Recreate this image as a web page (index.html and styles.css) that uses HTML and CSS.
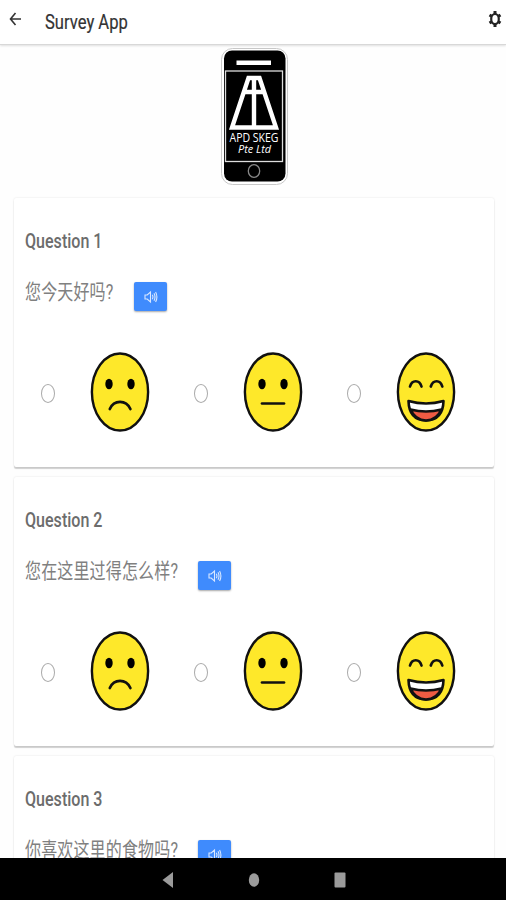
FILE: index.html
```html
<!DOCTYPE html>
<html lang="zh">
<head>
  <meta charset="UTF-8" />
  <meta name="viewport" content="width=device-width, initial-scale=1.0"/>
  <title>Survey App</title>
  <link rel="stylesheet" href="styles.css">
</head>
<body>
  <svg class="defs">
    <symbol id="sad" viewBox="0 0 60 80">
      <ellipse class="skin" cx="30" cy="40" rx="28.1" ry="38.5"/>
      <ellipse cx="19" cy="32" rx="3.7" ry="5.2"/>
      <ellipse cx="41" cy="32" rx="3.7" ry="5.2"/>
      <path class="line" d="M19.8 57C24 47.5 36 47.5 40.4 57"/>
    </symbol>
    <symbol id="neutral" viewBox="0 0 60 80">
      <ellipse class="skin" cx="30" cy="40" rx="28.1" ry="38.5"/>
      <ellipse cx="19" cy="32" rx="3.7" ry="5.2"/>
      <ellipse cx="41" cy="32" rx="3.7" ry="5.2"/>
      <path class="line" d="M19 51.5H41"/>
    </symbol>
    <symbol id="happy" viewBox="0 0 60 80">
      <ellipse class="skin" cx="30" cy="40" rx="28.1" ry="38.5"/>
      <path class="line" d="M14 34.5C16 27.5 23.5 27.5 25.5 34.5M34.8 34.5C37 27.5 44.3 27.5 46.3 34.5"/>
      <path class="teeth" d="M12.5 49Q30 54 47.500 49Q47 68 30 68.500Q13 68 12.500 49Z"/>
      <path class="tongue" d="M14.5 57.5Q30 61.500 45.500 57.500Q41 68 30 68.500Q19 68 14.500 57.500Z"/>
    </symbol>
    <symbol id="volume" viewBox="0 0 14 14">
      <path d="M1 5H3.200L6.500 2V12L3.200 9H1Z"/>
      <path d="M8.300 4.800Q9.600 7 8.300 9.200M10 3.300Q12 7 10 10.700M11.600 2Q14.200 7 11.600 12"/>
    </symbol>
  </svg>

  <div class="screen">
    <header class="toolbar">
      <svg class="back" viewBox="0 0 14 18"><path d="M13 9H2.500M7.500 3L2.500 9L7.500 15"/></svg>
      <h1>Survey App</h1>
      <svg class="settings" viewBox="0 0 14 18">
        <path class="gear" d="M7 1V4M7 14V17M1.500 5L4 6.500M10 11.500L12.500 13M12.500 5L10 6.500M4 11.500L1.500 13"/>
        <ellipse class="ring" cx="7" cy="9" rx="3.800" ry="5"/>
      </svg>
    </header>

    <main class="content">
      <svg class="logo" viewBox="0 0 70 140">
        <rect class="case" x="1.500" y="1.500" width="66" height="136" rx="11"/>
        <rect x="4" y="3.500" width="61.500" height="131" rx="8"/>
        <rect class="fill" x="16.500" y="13.500" width="34.500" height="4.500"/>
        <rect class="frame" x="5.500" y="24" width="57" height="90.500"/>
        <path class="mark" d="M28.500 31L12 80.500H56L39.500 31ZM34 31V80M24 45H44"/>
        <text class="brand" x="34" y="95" text-anchor="middle" textLength="49" lengthAdjust="spacingAndGlyphs">APD SKEG</text>
        <text class="brand-sub" x="34.500" y="106" text-anchor="middle" textLength="33" lengthAdjust="spacingAndGlyphs">Pte Ltd</text>
        <ellipse class="home" cx="34" cy="124" rx="5.700" ry="6.300"/>
      </svg>

      <section class="card">
        <h2>Question 1</h2>
        <div class="question">
          <p class="short">您今天好吗?</p>
          <button type="button"><svg><use href="#volume"/></svg></button>
        </div>
        <div class="answers">
          <label><span class="radio"></span><svg class="face"><use href="#sad"/></svg></label>
          <label><span class="radio"></span><svg class="face"><use href="#neutral"/></svg></label>
          <label><span class="radio"></span><svg class="face"><use href="#happy"/></svg></label>
        </div>
      </section>

      <section class="card">
        <h2>Question 2</h2>
        <div class="question">
          <p>您在这里过得怎么样?</p>
          <button type="button"><svg><use href="#volume"/></svg></button>
        </div>
        <div class="answers">
          <label><span class="radio"></span><svg class="face"><use href="#sad"/></svg></label>
          <label><span class="radio"></span><svg class="face"><use href="#neutral"/></svg></label>
          <label><span class="radio"></span><svg class="face"><use href="#happy"/></svg></label>
        </div>
      </section>

      <section class="card">
        <h2>Question 3</h2>
        <div class="question">
          <p>你喜欢这里的食物吗?</p>
          <button type="button"><svg><use href="#volume"/></svg></button>
        </div>
      </section>
    </main>

    <nav class="navbar">
      <svg viewBox="0 0 12 16"><path d="M11 0V16L0.500 8Z"/></svg>
      <svg viewBox="0 0 12 16"><ellipse cx="6" cy="8" rx="5.200" ry="6.800"/></svg>
      <svg viewBox="0 0 12 16"><rect x="0.500" y="0.500" width="11" height="15" rx="1"/></svg>
    </nav>
  </div>
</body>
</html>
```

FILE: styles.css
```css
* {
  box-sizing: border-box;
}
body {
  margin: 0;
  font-family: Roboto, "Noto Sans CJK SC", sans-serif;
  background-color: #fefefe;
}
.defs {
  display: none;
}
.screen {
  display: flex;
  flex-direction: column;
  height: 900px;
  overflow: hidden;
}
.toolbar {
  display: flex;
  flex: none;
  height: 45px;
  padding: 0 4px 0 8px;
  background-color: #fff;
  border-bottom: 1px solid #d8d8d8;
  box-shadow: 0 1px 2px rgba(0,0,0,0.12);
}
.back, .settings {
  width: 14px;
  height: 18px;
  margin-top: 10px;
  fill: none;
  stroke: #333;
  stroke-width: 1.6;
}
.settings {
  margin-left: auto;
}
.gear {
  stroke: #222;
  stroke-width: 3;
}
.ring {
  stroke: #222;
  stroke-width: 2.2;
}
/* the type is condensed, so every text line is narrowed from its left edge */
h1, h2, p {
  margin: 0;
  white-space: nowrap;
  transform-origin: left;
}
h1 {
  margin: 10px 0 0 23px;
  font-size: 21px;
  font-weight: 400;
  line-height: 25px;
  color: #333;
  -webkit-text-stroke: 0.2px #333;
  transform: scaleX(0.79);
}
.content {
  flex: 1;
  min-height: 0;
  overflow: hidden;
  padding: 2px 12px 0 14px;
}
.logo {
  display: block;
  width: 70px;
  height: 140px;
  margin: 0 0 11px 206px;
}
.case {
  fill: #fff;
  stroke: #c8c8c8;
}
.fill {
  fill: #fff;
}
.frame {
  fill: none;
  stroke: #ddd;
  stroke-width: 1.3;
}
.mark {
  fill: none;
  stroke: #fff;
  stroke-width: 4.4;
}
.brand, .brand-sub {
  fill: #fff;
  font-family: "Open Sans", sans-serif;
  font-size: 13.5px;
}
.brand-sub {
  font-size: 10px;
  font-style: italic;
}
.home {
  fill: none;
  stroke: #888;
  stroke-width: 1.3;
}
.card {
  height: 269px;
  margin-bottom: 10px;
  padding: 31px 11px 0;
  background-color: #fff;
  border-radius: 2px;
  box-shadow: 0 2px 1px rgba(0,0,0,0.18), 0 0 2px rgba(0,0,0,0.12);
}
h2 {
  font-size: 21px;
  font-weight: 500;
  line-height: 25px;
  color: #6c6c6c;
  transform: scaleX(0.765);
}
.question {
  display: flex;
  height: 60px;
  padding-top: 23px;
}
p {
  width: 173px;
  font-size: 21px;
  line-height: 30px;
  color: #808080;
  letter-spacing: 0.2px;
  transform: scaleX(0.762);
}
.short {
  width: 109px;
}
button {
  display: flex;
  align-items: center;
  justify-content: center;
  width: 33px;
  height: 29px;
  margin-top: 5px;
  padding: 0;
  background-color: #3f8bfd;
  border: none;
  border-radius: 2px;
  box-shadow: 0 1px 2px rgba(0,0,0,0.35);
}
button svg {
  width: 14px;
  height: 14px;
  fill: none;
  stroke: #d9e8ff;
  stroke-width: 1.1;
}
.answers {
  display: flex;
  padding: 38px 0 0 16px;
}
.answers label {
  display: flex;
  flex: none;
  align-items: center;
  gap: 35px;
  width: 153px;
}
.radio {
  width: 14px;
  height: 19px;
  margin-top: 2px;
  border: 1.5px solid #aaa;
  border-radius: 50%;
}
.face {
  width: 60px;
  height: 80px;
}
.skin {
  fill: #fee82a;
  stroke: #111;
  stroke-width: 2.4;
}
.line {
  fill: none;
  stroke: #111;
  stroke-width: 2.7;
  stroke-linecap: round;
}
.teeth, .tongue {
  fill: #fff;
  stroke: #111;
  stroke-width: 2.6;
  stroke-linejoin: round;
}
.tongue {
  fill: #ee5b43;
}
.navbar {
  display: flex;
  flex: none;
  align-items: center;
  justify-content: center;
  gap: 74px;
  height: 42px;
  padding: 2px 0 0 2px;
  background-color: #000;
}
.navbar svg {
  width: 12px;
  height: 16px;
  fill: #9b9b9b;
}
```
